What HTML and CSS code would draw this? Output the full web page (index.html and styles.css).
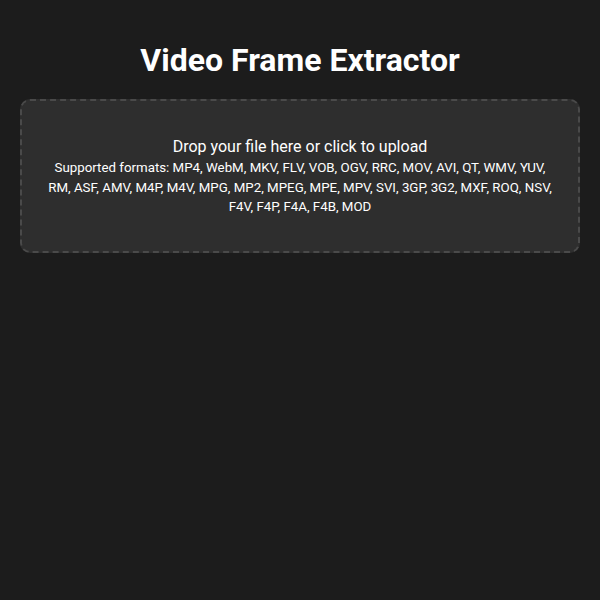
FILE: index.html
```html
<!DOCTYPE html>
<html>
<head>
<meta charset="utf-8">
<link rel="stylesheet" href="styles.css">
</head>
<body>
<div class="app">
  <h1 class="title">Video Frame Extractor</h1>
  <div class="dropzone">
    <p class="drop-main">Drop your file here or click to upload</p>
    <p class="drop-formats">Supported formats: MP4, WebM, MKV, FLV, VOB, OGV, RRC, MOV, AVI, QT, WMV, YUV, RM, ASF, AMV, M4P, M4V, MPG, MP2, MPEG, MPE, MPV, SVI, 3GP, 3G2, MXF, ROQ, NSV, F4V, F4P, F4A, F4B, MOD</p>
  </div>
</div>
</body>
</html>
```
FILE: styles.css
```css
html, body {
  margin: 0;
  padding: 0;
  background: #1c1c1c;
  color: #ffffff;
  font-family: Roboto, "Noto Sans", sans-serif;
}
.app {
  padding: 20px;
}
.title {
  margin: 20px 0 19px;
  text-align: center;
  font-size: 32px;
  font-weight: 700;
  line-height: 40px;
}
.dropzone {
  background: #2e2e2e;
  border: 2px dashed #4a4a4a;
  border-radius: 10px;
  padding: 35px 20px 34px;
  text-align: center;
}
.drop-main {
  margin: 0;
  font-size: 16px;
  line-height: 22px;
}
.drop-formats {
  margin: 0;
  font-size: 13.3px;
  line-height: 19.5px;
}
```
